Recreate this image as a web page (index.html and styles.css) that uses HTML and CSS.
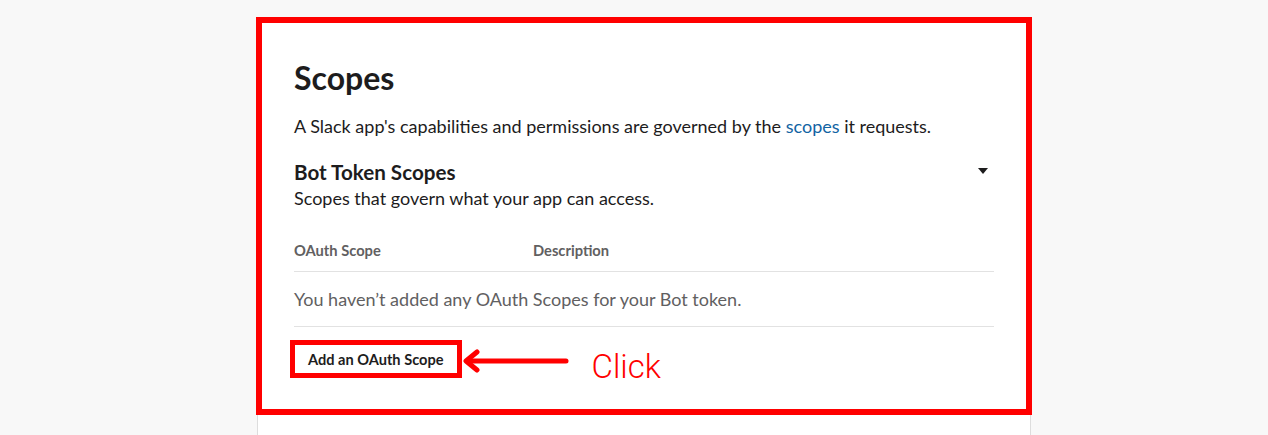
FILE: index.html
```html
<!DOCTYPE html>
<html>
<head>
<meta charset="utf-8">
<link rel="stylesheet" href="styles.css">
</head>
<body>
<div class="page">
  <div class="card">
    <h1 class="title">Scopes</h1>
    <p class="lead">A Slack app's capabilities and permissions are governed by the <a class="link" href="#">scopes</a> it requests.</p>
    <div class="section-head">
      <div>
        <h2 class="section-title">Bot Token Scopes</h2>
        <p class="section-sub">Scopes that govern what your app can access.</p>
      </div>
      <span class="caret"></span>
    </div>
    <div class="table-head">
      <span class="col-scope">OAuth Scope</span>
      <span class="col-desc">Description</span>
    </div>
    <div class="empty">You haven’t added any OAuth Scopes for your Bot token.</div>
    <div class="actions">
      <button class="btn">Add an OAuth Scope</button>
      <svg class="arrow" width="108" height="26" viewBox="0 0 108 26">
        <path d="M103 13 H8" stroke="#ff0000" stroke-width="5" stroke-linecap="round" fill="none"/>
        <path d="M14 4 L3 13 L14 22" stroke="#ff0000" stroke-width="5" stroke-linecap="round" stroke-linejoin="round" fill="none"/>
      </svg>
      <span class="click">Click</span>
    </div>
    <div class="highlight"></div>
  </div>
</div>
</body>
</html>
```
FILE: styles.css
```css
html, body {
  margin: 0;
  padding: 0;
  background: #f8f8f8;
  overflow: hidden;
}
body {
  font-family: Lato, "Noto Sans", sans-serif;
  color: #1d1c1d;
  padding-left: 20px;
}
.page {
  width: 774px;
  margin: 0 auto;
  padding-top: 20px;
}
.card {
  position: relative;
  background: #fff;
  border: 1px solid #dddddd;
  border-bottom: none;
  height: 415px;
  padding: 37px 36px 0 36px;
  box-sizing: border-box;
}
.title {
  margin: 0;
  font-size: 32px;
  font-weight: 700;
  line-height: 40px;
}
.lead {
  margin: 15px 0 0;
  font-size: 18px;
  line-height: 26px;
}
.link {
  color: #1264a3;
  text-decoration: none;
}
.section-head {
  display: flex;
  justify-content: space-between;
  align-items: flex-start;
  margin-top: 20px;
}
.section-title {
  margin: 0;
  font-size: 20.6px;
  font-weight: 700;
  line-height: 26px;
}
.section-sub {
  margin: 0;
  font-size: 18px;
  line-height: 26px;
}
.caret {
  width: 0;
  height: 0;
  border-left: 5px solid transparent;
  border-right: 5px solid transparent;
  border-top: 6px solid #1d1c1d;
  margin: 9px 6px 0 0;
}
.table-head {
  display: flex;
  margin-top: 29px;
  padding-bottom: 11px;
  border-bottom: 1px solid #e2e2e2;
  font-size: 14.7px;
  font-weight: 700;
  color: #616061;
  line-height: 20px;
}
.col-scope {
  width: 239px;
}
.empty {
  font-size: 18px;
  color: #616061;
  line-height: 26px;
  padding: 14px 0 14px;
  border-bottom: 1px solid #e2e2e2;
}
.actions {
  display: flex;
  align-items: flex-start;
  margin-top: 13px;
}
.btn {
  font-family: Lato, "Noto Sans", sans-serif;
  font-size: 14.6px;
  font-weight: 700;
  color: #1d1c1d;
  background: #fff;
  border: 5px solid #ff0000;
  padding: 6px 13px 5px 13px;
  margin-left: -4px;
  line-height: 17px;
}
.arrow {
  margin-left: 1px;
  margin-top: 8px;
}
.click {
  margin-left: 21px;
  font-family: Roboto, "Liberation Sans", sans-serif;
  font-weight: 300;
  font-size: 33px;
  color: #ff0000;
  margin-top: 9px;
  line-height: 36px;
}
.highlight {
  position: absolute;
  left: -2px;
  top: -4px;
  width: 776px;
  height: 398px;
  border: 6px solid #ff0000;
  box-sizing: border-box;
  pointer-events: none;
}
```
